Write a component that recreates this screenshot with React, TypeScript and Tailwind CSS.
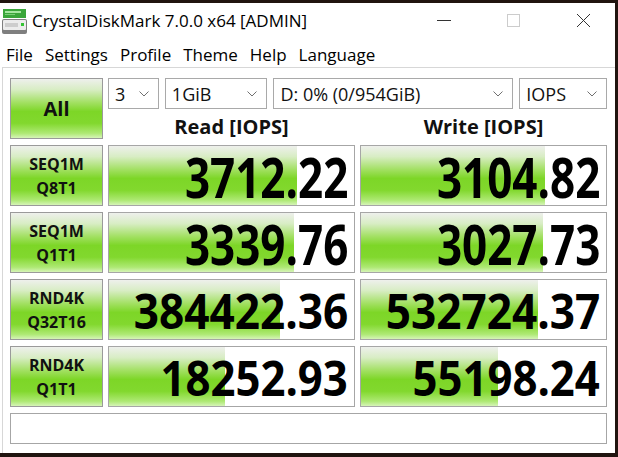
import React from "react";

interface Row {
  l1: string;
  l2: string;
  read: string;
  readBar: number;
  write: string;
  writeBar: number;
  size: string;
  scale: string;
}

const rows: Row[] = [
  { l1: "SEQ1M", l2: "Q8T1", read: "3712.22", readBar: 188, write: "3104.82", writeBar: 184, size: "text-[55px]", scale: "scale-x-[0.8]" },
  { l1: "SEQ1M", l2: "Q1T1", read: "3339.76", readBar: 185, write: "3027.73", writeBar: 182, size: "text-[55px]", scale: "scale-x-[0.8]" },
  { l1: "RND4K", l2: "Q32T16", read: "384422.36", readBar: 171, write: "532724.37", writeBar: 177, size: "text-[48px]", scale: "scale-x-[0.92]" },
  { l1: "RND4K", l2: "Q1T1", read: "18252.93", readBar: 116, write: "55198.24", writeBar: 137, size: "text-[48px]", scale: "scale-x-[0.91]" },
];

const green =
  "bg-[linear-gradient(to_bottom,#eef0ec_0%,#d8edc4_18%,#a2e062_40%,#7dd627_55%,#82d82e_75%,#aee974_92%,#d6f4b8_100%)]";

function Chevron() {
  return (
    <svg width="10" height="6" viewBox="0 0 10 6" className="shrink-0">
      <polyline points="0.5,0.5 5,5 9.5,0.5" fill="none" stroke="#707070" strokeWidth="1" />
    </svg>
  );
}

function Combo({ text, w }: { text: string; w: string }) {
  return (
    <div className={`${w} h-[31px] border border-[#a9a9a9] bg-white flex items-center pl-[6px] pr-[9px]`}>
      <span className="flex-1 text-[18px] text-[#111] leading-none">{text}</span>
      <Chevron />
    </div>
  );
}

function AppIcon() {
  return (
    <svg width="25" height="25" viewBox="0 0 25 25">
      <rect x="1" y="0" width="23" height="9" fill="#3aa63a" />
      <rect x="3" y="2" width="16" height="2" fill="#a6e6a0" />
      <rect x="3" y="5" width="10" height="1" fill="#7ccf78" />
      <rect x="0" y="10" width="25" height="15" rx="2" fill="#7f7f7f" />
      <rect x="1" y="11" width="23" height="10" rx="1" fill="#ececec" />
      <rect x="3" y="14" width="13" height="4" fill="#cdcdcd" />
      <rect x="19" y="14" width="3" height="3" fill="#34c434" />
    </svg>
  );
}

function Value({ text, bar, size, scale }: { text: string; bar: number; size: string; scale: string }) {
  return (
    <div className="relative h-[61px] border border-[#a6a6a6] bg-white">
      <div className={`absolute left-0 top-0 bottom-0 ${green}`} style={{ width: bar }} />
      <div className="relative h-full flex items-center justify-end pr-[6px] pt-[2px]">
        <span
          className={`inline-block origin-right ${scale} ${size} font-bold leading-none text-black font-['Open_Sans',sans-serif]`}
        >
          {text}
        </span>
      </div>
    </div>
  );
}

export default function App() {
  return (
    <div className="w-[618px] h-[457px] bg-[#20140f] pt-[3px] overflow-hidden font-['Open_Sans',sans-serif]">
      <div className="w-[615px] h-[450px] bg-white flex flex-col">
        {/* title bar */}
        <div className="h-[34px] flex items-center shrink-0">
          <div className="ml-[2px] mt-[2px]">
            <AppIcon />
          </div>
          <span className="ml-[5px] text-[17px] text-black leading-none">CrystalDiskMark 7.0.0 x64 [ADMIN]</span>
          <div className="ml-auto flex items-center mr-[25px]">
            <svg width="14" height="14" viewBox="0 0 14 14">
              <line x1="0" y1="7.5" x2="14" y2="7.5" stroke="#333" strokeWidth="1" />
            </svg>
            <svg width="13" height="13" viewBox="0 0 13 13" className="ml-[56px]">
              <rect x="0.5" y="0.5" width="12" height="12" fill="none" stroke="#cccccc" strokeWidth="1" />
            </svg>
            <svg width="13" height="13" viewBox="0 0 13 13" className="ml-[57px]">
              <line x1="0" y1="0" x2="13" y2="13" stroke="#333" strokeWidth="1" />
              <line x1="13" y1="0" x2="0" y2="13" stroke="#333" strokeWidth="1" />
            </svg>
          </div>
        </div>

        {/* menu */}
        <div className="h-[30px] flex items-center pl-[6px] gap-[12px] text-[17px] text-black leading-none shrink-0 pt-[4px]">
          <span>File</span>
          <span>Settings</span>
          <span>Profile</span>
          <span>Theme</span>
          <span>Help</span>
          <span>Language</span>
        </div>

        {/* client */}
        <div className="flex-1 ml-[2px] border-l border-t border-[#d7d7d7] pl-[7px] pt-[10px] flex flex-col gap-[6px]">
          <div className="grid grid-cols-[93px_247px_247px] gap-x-[5px] gap-y-[6px]">
            <div className={`h-[61px] border border-[#9a9a9a] ${green} flex items-center justify-center`}>
              <span className="text-[20px] font-bold text-[#111] leading-none">All</span>
            </div>
            <div className="col-span-2 flex flex-col">
              <div className="flex gap-[6px]">
                <Combo text="3" w="w-[51px]" />
                <Combo text="1GiB" w="w-[103px]" />
                <Combo text="D: 0% (0/954GiB)" w="w-[241px]" />
                <Combo text="IOPS" w="w-[88px]" />
              </div>
              <div className="flex-1 grid grid-cols-[247px_247px] gap-x-[5px] items-center pt-[6px]">
                <div className="text-center text-[20px] font-bold text-[#111] leading-none">Read [IOPS]</div>
                <div className="text-center text-[20px] font-bold text-[#111] leading-none">Write [IOPS]</div>
              </div>
            </div>

            {rows.map((r, i) => (
              <React.Fragment key={i}>
                <div className={`h-[61px] border border-[#9a9a9a] ${green} flex flex-col items-center justify-center gap-[8px] pt-[1px]`}>
                  <span className="text-[16px] font-bold text-[#111] leading-none">{r.l1}</span>
                  <span className="text-[16px] font-bold text-[#111] leading-none">{r.l2}</span>
                </div>
                <Value text={r.read} bar={r.readBar} size={r.size} scale={r.scale} />
                <Value text={r.write} bar={r.writeBar} size={r.size} scale={r.scale} />
              </React.Fragment>
            ))}
          </div>
          <div className="w-[597px] h-[31px] border border-[#a6a6a6] bg-white" />
        </div>
      </div>
    </div>
  );
}
